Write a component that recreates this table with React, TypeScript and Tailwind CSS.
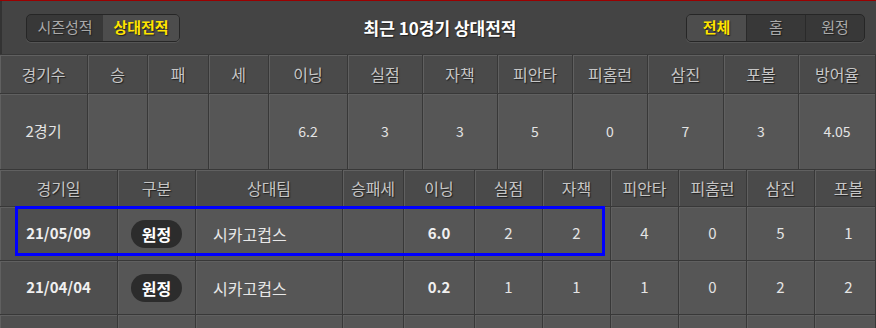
import React from "react";

const topHead = ["경기수", "승", "패", "세", "이닝", "실점", "자책", "피안타", "피홈런", "삼진", "포볼", "방어율"];
const topData = ["2경기", "", "", "", "6.2", "3", "3", "5", "0", "7", "3", "4.05"];

const gameHead = ["경기일", "구분", "상대팀", "승패세", "이닝", "실점", "자책", "피안타", "피홈런", "삼진", "포볼"];

const games = [
  { date: "21/05/09", type: "원정", team: "시카고컵스", res: "", ip: "6.0", stats: ["2", "2", "4", "0", "5", "1"] },
  { date: "21/04/04", type: "원정", team: "시카고컵스", res: "", ip: "0.2", stats: ["1", "1", "1", "0", "2", "2"] },
  { date: "", type: "", team: "", res: "", ip: "", stats: ["", "", "", "", "", ""] },
];

const cell =
  "flex items-center justify-center border-r border-b border-[#383838] shadow-[inset_1px_1px_0_#606060]";
const shadowText = "[text-shadow:1px_1px_1px_#202020]";

const Toggle: React.FC<{ items: string[]; active: number; itemClass: string }> = ({ items, active, itemClass }) => {
  return (
    <div className="flex h-[28px] overflow-hidden rounded-[5px] border border-[#262626] bg-[#383838] shadow-[0_1px_0_#555]">
      {items.map((t, i) => (
        <div
          key={t}
          className={
            i === active
              ? `${itemClass} flex items-center justify-center bg-[#4d4d4d] text-[15px] font-bold text-[#ffe400] ${shadowText}`
              : `${itemClass} flex items-center justify-center border-l border-[#2a2a2a] text-[15px] text-[#a9a9a9] first:border-l-0 ${shadowText}`
          }
        >
          {t}
        </div>
      ))}
    </div>
  );
};

export default function App() {
  return (
    <div className="relative h-[328px] w-[876px] overflow-hidden border-t border-[#9a0000] bg-[#444444] font-['Noto_Sans_CJK_KR','Noto_Sans',sans-serif]">
      {/* top bar */}
      <div className="flex h-[53px] items-center justify-between border-l-2 border-[#333] pr-[11px] pl-[24px]">
        <Toggle items={["시즌성적", "상대전적"]} active={1} itemClass="w-[76px]" />
        <div className={`ml-[14px] text-[17px] font-bold text-white ${shadowText}`}>최근 10경기 상대전적</div>
        <Toggle items={["전체", "홈", "원정"]} active={0} itemClass="w-[59px]" />
      </div>

      {/* summary */}
      <div className="grid grid-cols-[88px_60px_61px_60px_79px_75px_75px_75px_75px_76px_75px_77px] grid-rows-[39px_76px] border-t border-[#383838]">
        {topHead.map((h) => (
          <div key={h} className={`${cell} bg-[#4a4a4a] text-[16px] text-[#c6c6c6] ${shadowText}`}>
            {h}
          </div>
        ))}
        {topData.map((d, i) => (
          <div
            key={i}
            className={`${cell} text-[#e4e4e4] ${i === 0 ? "bg-[#4f4f4f] text-[15px]" : "bg-[#565656] text-[14px]"}`}
          >
            {d}
          </div>
        ))}
      </div>

      {/* game list */}
      <div className="grid grid-cols-[118px_78px_147px_61px_71px_68px_68px_68px_68px_68px_61px] grid-rows-[37px_54px_54px_54px]">
        {gameHead.map((h, i) => (
          <div
            key={h}
            className={`${cell} bg-[#4a4a4a] text-[16px] text-[#c6c6c6] ${shadowText} ${i === gameHead.length - 1 ? "pl-[7px]" : ""}`}
          >
            {h}
          </div>
        ))}
        {games.map((g, r) => (
          <React.Fragment key={r}>
            <div className={`${cell} bg-[#4f4f4f] text-[15px] font-bold text-[#f0f0f0]`}>{g.date}</div>
            <div className={`${cell} bg-[#565656]`}>
              {g.type && (
                <span className="flex h-[28px] w-[51px] items-center justify-center rounded-full bg-[#2c2c2c] text-[16px] font-bold text-white">
                  {g.type}
                </span>
              )}
            </div>
            <div className={`${cell} justify-start bg-[#565656] pl-[17px] text-[16px] text-[#e8e8e8]`}>{g.team}</div>
            <div className={`${cell} bg-[#565656]`}>{g.res}</div>
            <div className={`${cell} bg-[#565656] text-[15px] font-bold text-[#f0f0f0]`}>{g.ip}</div>
            {g.stats.map((v, i) => (
              <div
                key={i}
                className={`${cell} bg-[#565656] text-[15px] text-[#e4e4e4] ${i === g.stats.length - 1 ? "pl-[7px]" : ""}`}
              >
                {v}
              </div>
            ))}
          </React.Fragment>
        ))}
      </div>

      {/* highlight box */}
      <div className="absolute top-[205px] left-[15px] h-[50px] w-[590px] border-[3px] border-[#0000ff]" />
    </div>
  );
}
